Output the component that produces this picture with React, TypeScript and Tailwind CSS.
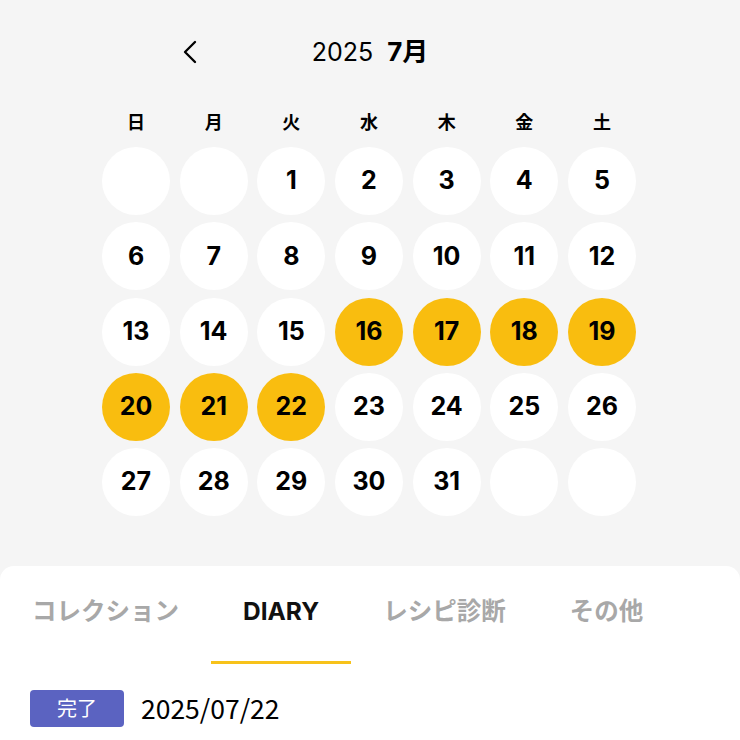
import { ChevronLeft } from 'lucide-react';

const weekdays = ['日', '月', '火', '水', '木', '金', '土'];
const marked = [16, 17, 18, 19, 20, 21, 22];
const tabs = ['コレクション', 'DIARY', 'レシピ診断', 'その他'];

export default function App() {
  // July 2025 starts on Tuesday
  const cells: (number | null)[] = [null, null];
  for (let d = 1; d <= 31; d++) cells.push(d);
  while (cells.length < 35) cells.push(null);

  return (
    <div
      className="w-[740px] h-[740px] bg-[#f5f5f5] flex flex-col overflow-hidden"
      style={{ fontFamily: 'Inter, "Noto Sans CJK JP", sans-serif' }}
    >
      <div className="h-[104px] grid grid-cols-[1fr_auto_1fr] items-center">
        <div className="pl-[170px] flex items-center">
          <ChevronLeft size={40} strokeWidth={1.4} className="text-black" />
        </div>
        <div className="flex items-baseline gap-[14px] text-black">
          <span className="text-[25px]">2025</span>
          <span className="text-[26px] font-bold">7月</span>
        </div>
        <div />
      </div>

      <div className="ml-[102px] w-[534px] grid grid-cols-7 gap-x-[9.67px] h-[34px] items-center">
        {weekdays.map((w) => (
          <div
            key={w}
            className="text-center text-[18px] font-bold text-black"
            style={{ fontFamily: '"Noto Sans CJK JP", sans-serif' }}
          >
            {w}
          </div>
        ))}
      </div>

      <div className="ml-[102px] w-[534px] mt-[9px] grid grid-cols-7 gap-x-[9.67px] gap-y-[7.3px]">
        {cells.map((d, i) => (
          <div
            key={i}
            className={`h-[68px] w-[68px] rounded-full flex items-center justify-center text-[25px] font-bold text-black ${
              d && marked.includes(d) ? 'bg-[#f9bd0f]' : 'bg-white'
            }`}
          >
            {d}
          </div>
        ))}
      </div>

      <div className="mt-[50px] flex-1 bg-white rounded-t-[14px]">
        <div className="flex">
          {tabs.map((t) => (
            <div
              key={t}
              className={`h-[98px] px-8 pt-[29px] flex flex-col justify-between text-[24.5px] font-bold ${
                t === 'DIARY' ? 'text-[#111]' : 'text-[#a8a8a8]'
              }`}
            >
              <span className="leading-[32px] whitespace-nowrap">{t}</span>
              <div
                className={`h-[3px] -mx-8 ${t === 'DIARY' ? 'bg-[#f7c21a]' : ''}`}
              />
            </div>
          ))}
        </div>

        <div className="flex items-center mt-[24px] px-[30px] gap-[17px]">
          <span
            className="w-[94px] h-[37px] rounded-[4px] bg-[#5b63c1] text-white text-[20px] flex items-center justify-center"
            style={{ fontFamily: '"Noto Sans CJK JP", sans-serif' }}
          >
            完了
          </span>
          <span
            className="text-[26.5px] text-black"
            style={{ fontFamily: '"Noto Sans CJK JP", sans-serif' }}
          >
            2025/07/22
          </span>
        </div>
      </div>
    </div>
  );
}
